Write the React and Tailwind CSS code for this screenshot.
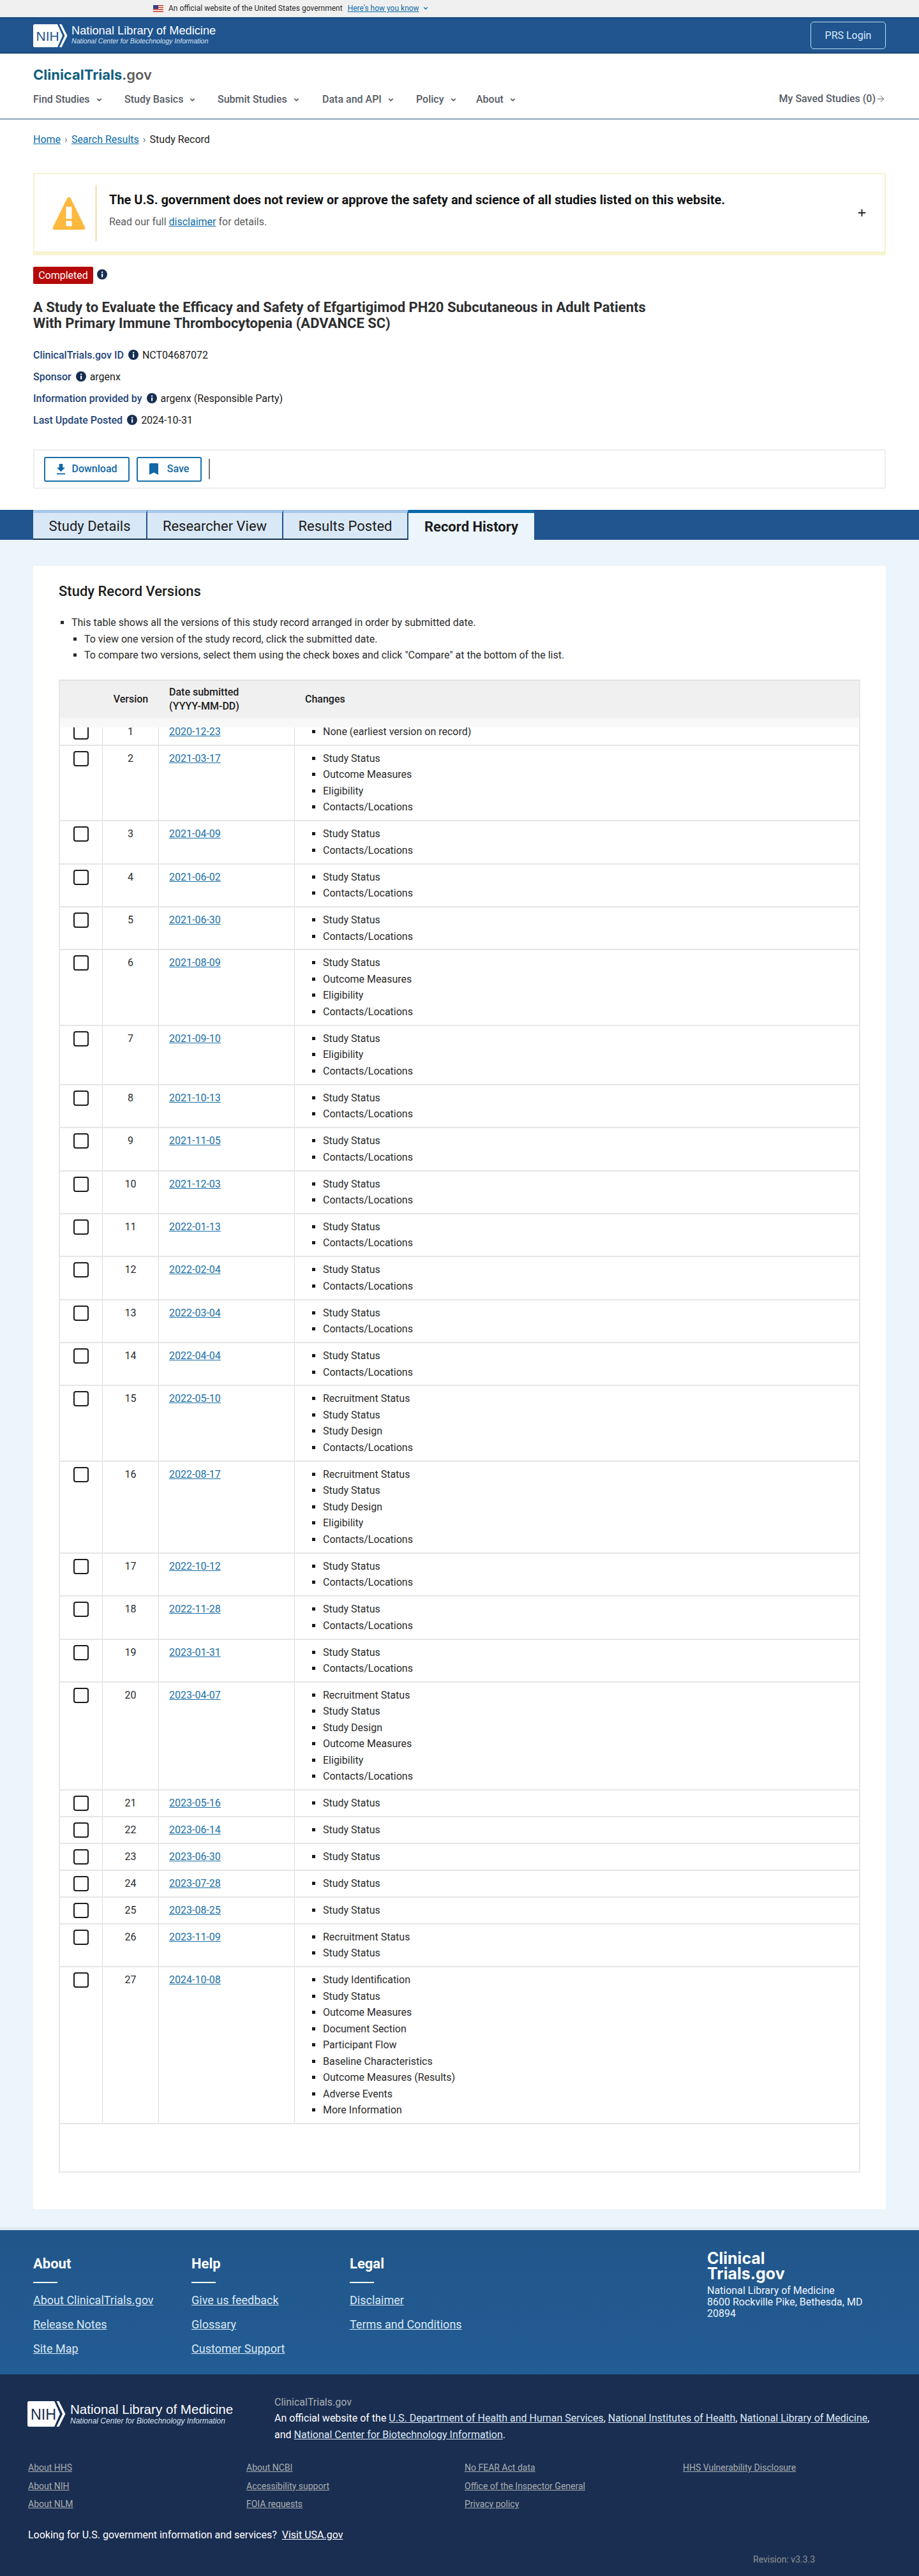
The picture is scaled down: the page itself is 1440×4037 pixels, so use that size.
import React from "react";
import { ChevronDown, Plus, ArrowRight } from "lucide-react";

const rows = [
  ["1", "2020-12-23", ["None (earliest version on record)"]],
  ["2", "2021-03-17", ["Study Status", "Outcome Measures", "Eligibility", "Contacts/Locations"]],
  ["3", "2021-04-09", ["Study Status", "Contacts/Locations"]],
  ["4", "2021-06-02", ["Study Status", "Contacts/Locations"]],
  ["5", "2021-06-30", ["Study Status", "Contacts/Locations"]],
  ["6", "2021-08-09", ["Study Status", "Outcome Measures", "Eligibility", "Contacts/Locations"]],
  ["7", "2021-09-10", ["Study Status", "Eligibility", "Contacts/Locations"]],
  ["8", "2021-10-13", ["Study Status", "Contacts/Locations"]],
  ["9", "2021-11-05", ["Study Status", "Contacts/Locations"]],
  ["10", "2021-12-03", ["Study Status", "Contacts/Locations"]],
  ["11", "2022-01-13", ["Study Status", "Contacts/Locations"]],
  ["12", "2022-02-04", ["Study Status", "Contacts/Locations"]],
  ["13", "2022-03-04", ["Study Status", "Contacts/Locations"]],
  ["14", "2022-04-04", ["Study Status", "Contacts/Locations"]],
  ["15", "2022-05-10", ["Recruitment Status", "Study Status", "Study Design", "Contacts/Locations"]],
  ["16", "2022-08-17", ["Recruitment Status", "Study Status", "Study Design", "Eligibility", "Contacts/Locations"]],
  ["17", "2022-10-12", ["Study Status", "Contacts/Locations"]],
  ["18", "2022-11-28", ["Study Status", "Contacts/Locations"]],
  ["19", "2023-01-31", ["Study Status", "Contacts/Locations"]],
  ["20", "2023-04-07", ["Recruitment Status", "Study Status", "Study Design", "Outcome Measures", "Eligibility", "Contacts/Locations"]],
  ["21", "2023-05-16", ["Study Status"]],
  ["22", "2023-06-14", ["Study Status"]],
  ["23", "2023-06-30", ["Study Status"]],
  ["24", "2023-07-28", ["Study Status"]],
  ["25", "2023-08-25", ["Study Status"]],
  ["26", "2023-11-09", ["Recruitment Status", "Study Status"]],
  ["27", "2024-10-08", ["Study Identification", "Study Status", "Outcome Measures", "Document Section", "Participant Flow", "Baseline Characteristics", "Outcome Measures (Results)", "Adverse Events", "More Information"]],
];

function NihLogo({ color, className }) {
  return (
    <svg viewBox="0 0 54 36" className={"shrink-0 " + className}>
      <path d="M2.5 0H38L46 18L38 36H2.5Q0 36 0 33.5V2.5Q0 0 2.5 0Z" fill="#fff" />
      <path d="M41 0H44.5L53.5 18L44.5 36H41L49.5 18Z" fill="#fff" />
      <text x="4.5" y="26" fontFamily="'Liberation Sans',sans-serif" fontSize="21" fill={color}>NIH</text>
    </svg>
  );
}

function Info({ className = "" }) {
  return (
    <svg viewBox="0 0 16 16" className={"w-4 h-4 shrink-0 " + className}>
      <circle cx="8" cy="8" r="8" fill="#162e51" />
      <rect x="7" y="7" width="2.2" height="5.4" fill="#fff" />
      <rect x="7" y="3.6" width="2.2" height="2.1" fill="#fff" />
    </svg>
  );
}

function NavItem({ label, className }) {
  return (
    <div className={"flex items-center " + className}>
      <span>{label}</span>
      <ChevronDown className="w-[11px] h-[11px] ml-[9px]" strokeWidth={3.5} />
    </div>
  );
}

function Meta({ label, value }) {
  return (
    <div className="flex items-center h-[34px]">
      <span className="font-medium text-[#1f4479]">{label}</span>
      <Info className="ml-[7px] -mt-[3px]" />
      <span className="ml-[6px] text-[#1b1b1b]">{value}</span>
    </div>
  );
}

function Row({ r, first }) {
  return (
    <div className={"grid grid-cols-[67px_88px_213px_1fr] border-b-2 border-[#e6e6e6] " + (first ? "-mt-[13px]" : "")}>
      <div className="border-r border-[#dcdcdc] pt-[8px] pl-[21px]">
        <div className="w-[24px] h-[24px] rounded-[4px] border-2 border-[#1b1b1b] bg-white" />
      </div>
      <div className="border-r border-[#dcdcdc] pt-[7px] text-center leading-[25.5px] text-[#2b2b2b]">{r[0]}</div>
      <div className="border-r border-[#dcdcdc] pt-[7px] pl-[16px] leading-[25.5px]">
        <a className="text-[#1a6fa8] underline">{r[1]}</a>
      </div>
      <ul className="pt-[7px] pb-[7.4px] pl-[44px] list-[square] text-[#2b2b2b] marker:text-[#1b1b1b]">
        {r[2].map((c, i) => (
          <li key={i} className="leading-[25.5px]">{c}</li>
        ))}
      </ul>
    </div>
  );
}

const footLink = "underline block leading-[38px] text-[#dce9f5]";
const smallLink = "underline block text-[14px] leading-[28.5px] text-[#a9aeb1]";

export default function App() {
  return (
    <div className="font-[Roboto,sans-serif] text-[16px] bg-white text-[#1b1b1b]">
      {/* gov banner */}
      <div className="h-[27px] bg-[#f0f0f0] border-b border-[#d6e6f3] flex items-center text-[12px] text-[#2b2b2b] pl-[240px]">
        <svg viewBox="0 0 16 11" className="w-[16px] h-[11px] mr-[8px] mt-[1px]">
          <rect width="16" height="11" fill="#fff" />
          <rect y="0" width="16" height="1.6" fill="#c8402f" />
          <rect y="3.1" width="16" height="1.6" fill="#c8402f" />
          <rect y="6.2" width="16" height="1.6" fill="#c8402f" />
          <rect y="9.4" width="16" height="1.6" fill="#c8402f" />
          <rect width="8" height="6" fill="#3b3f8c" />
        </svg>
        <span>An official website of the United States government</span>
        <a className="ml-[8px] underline text-[#0b6ba8]">Here's how you know</a>
        <ChevronDown className="w-[10px] h-[10px] ml-[5px] text-[#0b6ba8]" strokeWidth={3} />
      </div>

      {/* NLM header */}
      <div className="h-[57px] bg-[#20558f] border-y-2 border-[#1a4777] flex items-center justify-between px-[52px]">
        <div className="flex items-center">
          <NihLogo color="#20558f" className="w-[54px] h-[36px]" />
          <div className="ml-[6px] font-['Liberation_Sans',sans-serif] text-white">
            <div className="text-[18.25px] leading-[20px] -mt-[2px]">National Library of Medicine</div>
            <div className="text-[10.6px] leading-[13px] italic text-[#d7e4f2]">National Center for Biotechnology Information</div>
          </div>
        </div>
        <div className="w-[118px] h-[43px] rounded-[5px] border border-[#bfdcf5] flex items-center justify-center text-[#d9ebfb]">PRS Login</div>
      </div>

      {/* site header */}
      <div className="h-[103px] border-b border-[#1f4f7a] px-[52px] pt-[18px]">
        <div className="font-[Inter,sans-serif] text-[22px] leading-[30px] font-bold text-[#115e7e]">
          ClinicalTrials<span className="text-[#5c5c5c] font-semibold">.gov</span>
        </div>
        <div className="flex items-center mt-[12px] h-[24px] font-medium text-[#565c65]">
          <NavItem label="Find Studies" className="w-[143px]" />
          <NavItem label="Study Basics" className="w-[146px]" />
          <NavItem label="Submit Studies" className="w-[164px]" />
          <NavItem label="Data and API" className="w-[147px]" />
          <NavItem label="Policy" className="w-[94px]" />
          <NavItem label="About" className="w-[70px]" />
          <div className="ml-auto flex items-center -mt-[2px]">
            My Saved Studies (0)
            <ArrowRight className="w-[16px] h-[16px]" strokeWidth={1.5} />
          </div>
        </div>
      </div>

      {/* breadcrumb + alert + study head */}
      <div className="px-[52px]">
        <div className="pt-[21px] h-[84px] flex items-start leading-[22px]">
          <a className="underline text-[#0b6ba8]">Home</a>
          <span className="mx-[6px] text-[#71767a]">›</span>
          <a className="underline text-[#0b6ba8]">Search Results</a>
          <span className="mx-[6px] text-[#71767a]">›</span>
          <span>Study Record</span>
        </div>

        <div className="h-[129px] border-2 border-b-[6px] border-[#f8f2cf] flex items-center relative">
          <svg viewBox="0 0 52 52" className="w-[52px] h-[52px] ml-[28px]">
            <path d="M26 1C27.5 1 28.5 2 29 3L51 48C52 50.5 50.5 52 48.5 52H3.5C1.5 52 0 50.5 1 48L23 3C23.5 2 24.5 1 26 1Z" fill="#fdb83e" />
            <rect x="21.5" y="16" width="9" height="19" fill="#fff" />
            <rect x="21.5" y="38" width="9" height="8.5" fill="#fff" />
          </svg>
          <div className="w-px h-[88px] ml-[16px] bg-[#f3bd4e]" />
          <div className="ml-[20px] mb-[7px]">
            <div className="text-[20px] font-bold leading-[26px] text-[#111]">The U.S. government does not review or approve the safety and science of all studies listed on this website.</div>
            <div className="mt-[10px] text-[#5c5c5c] leading-[24px]">
              Read our full <a className="underline text-[#0b6ba8]">disclaimer</a> for details.
            </div>
          </div>
          <Plus className="absolute right-[27px] top-[52px] w-[17px] h-[17px] text-[#1b1b1b]" strokeWidth={2.5} />
        </div>

        <div className="flex items-center mt-[18px]">
          <span className="w-[94px] h-[27px] rounded-[2px] bg-[#b50909] text-white flex items-center justify-center">Completed</span>
          <Info className="ml-[6px] -mt-[3px]" />
        </div>

        <h1 className="mt-[24px] text-[22px] leading-[25px] font-bold text-[#2d2e2f]">
          A Study to Evaluate the Efficacy and Safety of Efgartigimod PH20 Subcutaneous in Adult Patients
          <br />
          With Primary Immune Thrombocytopenia (ADVANCE SC)
        </h1>

        <div className="mt-[21px]">
          <Meta label="ClinicalTrials.gov ID" value="NCT04687072" />
          <Meta label="Sponsor" value="argenx" />
          <Meta label="Information provided by" value="argenx (Responsible Party)" />
          <Meta label="Last Update Posted" value="2024-10-31" />
        </div>

        <div className="mt-[28px] h-[62px] border-2 border-[#eceef0] rounded-[2px] flex items-center pl-[15px]">
          <button className="w-[134px] h-[39px] rounded-[3px] border-2 border-[#1a6fa8] flex items-center justify-center font-medium text-[#1267a6]">
            <svg viewBox="0 0 16 18" className="w-[15px] h-[17px] mr-[9px]" fill="#1267a6">
              <path d="M5 0H11V6H15L8 13L1 6H5Z" />
              <rect x="1" y="15.5" width="14" height="2" />
            </svg>
            Download
          </button>
          <button className="ml-[11px] w-[102px] h-[39px] rounded-[3px] border-2 border-[#1a6fa8] flex items-center justify-center font-medium text-[#1267a6]">
            <svg viewBox="0 0 14 18" className="w-[14px] h-[18px] mr-[14px]" fill="#1267a6">
              <path d="M0 1.5Q0 0 1.5 0H12.5Q14 0 14 1.5V18L7 14.5L0 18Z" />
            </svg>
            Save
          </button>
          <div className="ml-[11px] w-[2px] h-[32px] bg-[#71767a]" />
        </div>
      </div>

      {/* tabs */}
      <div className="mt-[33px] h-[47px] bg-[#20558f] pl-[52px] flex items-stretch">
        {[
          ["Study Details", "w-[179px]"],
          ["Researcher View", "w-[213px]"],
          ["Results Posted", "w-[196px]"],
        ].map(([t, w]) => (
          <div key={t} className={w + " bg-[#d9e8f6] border-t-[5px] border-t-[#a9c9ea] border-b-2 border-b-[#162e51] border-r-2 border-r-[#20558f] flex items-center justify-center text-[22px] text-[#1b1b1b]"}>
            {t}
          </div>
        ))}
        <div className="w-[197px] bg-[#edf5fc] border-t-[5px] border-t-[#0b6ba8] flex items-center justify-center text-[22px] font-bold text-[#1b1b1b]">
          Record History
        </div>
      </div>

      {/* main */}
      <div className="bg-[#edf5fc] px-[52px] pt-[41px] pb-[28px] border-b-[5px] border-[#dfeaf3]">
        <div className="bg-white h-[2575px] px-[40px] pt-[26px]">
          <h2 className="text-[22px] font-medium leading-[28px] text-[#1b1b1b]">Study Record Versions</h2>
          <ul className="mt-[22px] list-[square] pl-[20px] text-[#2b2b2b] leading-[25.5px]">
            <li>This table shows all the versions of this study record arranged in order by submitted date.</li>
            <ul className="list-[square] pl-[20px]">
              <li>To view one version of the study record, click the submitted date.</li>
              <li>To compare two versions, select them using the check boxes and click "Compare" at the bottom of the list.</li>
            </ul>
          </ul>

          <div className="mt-[25.5px] border-l-2 border-r-2 border-[#e8e8e8]">
            <div className="relative z-10 border-t-2 border-[#e3e3e3]">
              <div className="h-[58px] bg-[#f0f0f0] grid grid-cols-[67px_88px_213px_1fr] items-center font-medium text-[#1b1b1b]">
                <div />
                <div className="text-center">Version</div>
                <div className="pl-[16px] leading-[22px]">Date submitted<br />(YYYY-MM-DD)</div>
                <div className="pl-[16px]">Changes</div>
              </div>
              <div className="h-[15px] bg-[#f8f8f8]" />
            </div>
            <div className="overflow-hidden pt-px -mt-px">
              {rows.map((r, i) => (
                <Row key={r[0]} r={r} first={i === 0} />
              ))}
            </div>
            <div className="h-[76px] border-b-2 border-[#e6e6e6]" />
          </div>
        </div>
      </div>

      {/* footer upper */}
      <div className="h-[226px] bg-linear-to-b from-[#21568a] to-[#225c94] text-white px-[52px] pt-[37px] flex">
        {[
          ["About", ["About ClinicalTrials.gov", "Release Notes", "Site Map"]],
          ["Help", ["Give us feedback", "Glossary", "Customer Support"]],
          ["Legal", ["Disclaimer", "Terms and Conditions"]],
        ].map(([h, links]) => (
          <div key={h} className="w-[248px]">
            <div className="text-[22px] font-bold leading-[32px]">{h}</div>
            <div className="mt-[12px] w-[38px] h-[2px] bg-white" />
            <div className="mt-[8px] text-[18px]">
              {links.map((l) => (
                <a key={l} className={footLink}>{l}</a>
              ))}
            </div>
          </div>
        ))}
        <div className="ml-auto w-[280px] -mt-[5px]">
          <div className="font-[Inter,sans-serif] font-bold text-[25px] leading-[24px]">Clinical<br />Trials.gov</div>
          <div className="mt-[6px] leading-[18px] w-[250px] text-[#edf5fc]">National Library of Medicine<br />8600 Rockville Pike, Bethesda, MD 20894</div>
        </div>
      </div>

      {/* footer lower */}
      <div className="h-[316px] bg-[#1a2e52] text-white px-[44px] pt-[32px] relative">
        <div className="flex">
          <div className="flex items-start w-[386px]">
            <NihLogo color="#1a2e52" className="w-[60px] h-[40px] -ml-[1px] mt-[10px]" />
            <div className="ml-[7px] mt-[12px] font-['Liberation_Sans',sans-serif]">
              <div className="text-[20.6px] leading-[22px]">National Library of Medicine</div>
              <div className="text-[12px] leading-[14px] italic text-[#d7e4f2]">National Center for Biotechnology Information</div>
            </div>
          </div>
          <div className="leading-[26px] flex-1">
            <div className="text-[#a9aeb1] leading-[24px]">ClinicalTrials.gov</div>
            <div>
              An official website of the <a className="underline text-[#dce9f5]">U.S. Department of Health and Human Services</a>, <a className="underline text-[#dce9f5]">National Institutes of Health</a>, <a className="underline text-[#dce9f5]">National Library of Medicine</a>,
              <br />and <a className="underline text-[#dce9f5]">National Center for Biotechnology Information</a>.
            </div>
          </div>
        </div>
        <div className="mt-[24px] grid grid-cols-[342px_342px_342px_1fr]">
          {[
            ["About HHS", "About NIH", "About NLM"],
            ["About NCBI", "Accessibility support", "FOIA requests"],
            ["No FEAR Act data", "Office of the Inspector General", "Privacy policy"],
            ["HHS Vulnerability Disclosure"],
          ].map((c, i) => (
            <div key={i}>
              {c.map((l) => (
                <a key={l} className={smallLink}>{l}</a>
              ))}
            </div>
          ))}
        </div>
        <div className="mt-[22.5px] leading-[24px]">
          Looking for U.S. government information and services?<a className="ml-[8px] underline">Visit USA.gov</a>
        </div>
        <div className="absolute left-[1180px] top-[280px] text-[14px] text-[#8d9297]">Revision: v3.3.3</div>
      </div>
    </div>
  );
}
